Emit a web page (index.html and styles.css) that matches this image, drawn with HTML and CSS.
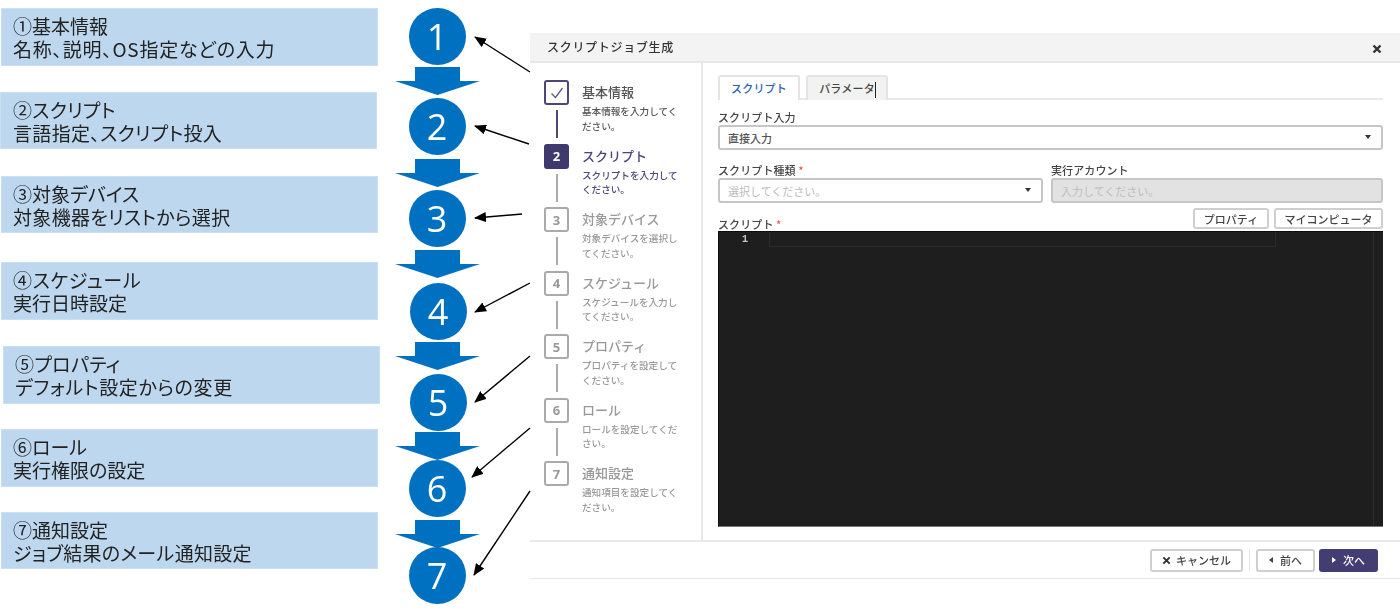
FILE: index.html
```html
<!DOCTYPE html>
<html lang="ja">
<head>
<meta charset="utf-8">
<title>スクリプトジョブ生成</title>
<link rel="stylesheet" href="styles.css">
</head>
<body>
<main class="page">
  <section class="labels">
    <div class="label l1">①基本情報<br><span class="wide">名称、説明、OS指定などの入力</span></div>
    <div class="label l2"><span class="ls1">②スクリプト</span><br><span class="ls1">言語指定、スクリプト投入</span></div>
    <div class="label l3">③対象デバイス<br><span class="ls1">対象機器をリストから選択</span></div>
    <div class="label l4"><span class="ls2">④スケジュール</span><br>実行日時設定</div>
    <div class="label l5"><span class="ls1">⑤プロパティ</span><br><span class="ls2">デフォルト設定からの変更</span></div>
    <div class="label l6">⑥ロール<br>実行権限の設定</div>
    <div class="label l7">⑦通知設定<br><span class="ls1">ジョブ結果のメール通知設定</span></div>
  </section>

  <section class="chain">
    <div class="circle c1">1</div>
    <svg class="down d1" viewBox="0 0 85 28"><polygon points="20,0 65,0 65,14 85,14 42.500,28 0,14 20,14"/></svg>
    <div class="circle c2">2</div>
    <svg class="down d2" viewBox="0 0 85 28"><polygon points="20,0 65,0 65,14 85,14 42.500,28 0,14 20,14"/></svg>
    <div class="circle c3">3</div>
    <svg class="down d3" viewBox="0 0 85 28"><polygon points="20,0 65,0 65,14 85,14 42.500,28 0,14 20,14"/></svg>
    <div class="circle c4">4</div>
    <svg class="down d4" viewBox="0 0 85 28"><polygon points="20,0 65,0 65,14 85,14 42.500,28 0,14 20,14"/></svg>
    <div class="circle c5">5</div>
    <svg class="down d5" viewBox="0 0 85 28"><polygon points="20,0 65,0 65,14 85,14 42.500,28 0,14 20,14"/></svg>
    <div class="circle c6">6</div>
    <svg class="down d6" viewBox="0 0 85 28"><polygon points="20,0 65,0 65,14 85,14 42.500,28 0,14 20,14"/></svg>
    <div class="circle c7">7</div>
  </section>

  <section class="dialog">
    <header class="dialog-head">
      <h1 class="dialog-title">スクリプトジョブ生成</h1>
      <svg class="close" viewBox="0 0 10 10"><path d="M1.5 1.5 8.5 8.5M8.5 1.5 1.5 8.5"/></svg>
    </header>
    <div class="dialog-body">
      <nav class="steps">
        <div class="step done">
          <div class="marker"><span class="box"><svg class="check" viewBox="0 0 16 16"><path d="M2.5 8.5 6.5 12.5 13.5 3"/></svg></span><i class="link"></i></div>
          <div class="step-text"><div class="step-title">基本情報</div><p class="step-desc">基本情報を入力してく<br>ださい。</p></div>
        </div>
        <div class="step active">
          <div class="marker"><span class="box">2</span><i class="link"></i></div>
          <div class="step-text"><div class="step-title">スクリプト</div><p class="step-desc">スクリプトを入力して<br>ください。</p></div>
        </div>
        <div class="step">
          <div class="marker"><span class="box">3</span><i class="link"></i></div>
          <div class="step-text"><div class="step-title">対象デバイス</div><p class="step-desc">対象デバイスを選択し<br>てください。</p></div>
        </div>
        <div class="step">
          <div class="marker"><span class="box">4</span><i class="link"></i></div>
          <div class="step-text"><div class="step-title">スケジュール</div><p class="step-desc">スケジュールを入力し<br>てください。</p></div>
        </div>
        <div class="step">
          <div class="marker"><span class="box">5</span><i class="link"></i></div>
          <div class="step-text"><div class="step-title">プロパティ</div><p class="step-desc">プロパティを設定して<br>ください。</p></div>
        </div>
        <div class="step">
          <div class="marker"><span class="box">6</span><i class="link"></i></div>
          <div class="step-text"><div class="step-title">ロール</div><p class="step-desc">ロールを設定してくだ<br>さい。</p></div>
        </div>
        <div class="step">
          <div class="marker"><span class="box">7</span></div>
          <div class="step-text"><div class="step-title">通知設定</div><p class="step-desc">通知項目を設定してく<br>ださい。</p></div>
        </div>
      </nav>
      <div class="form">
        <div class="tabs">
          <div class="tab current">スクリプト</div>
          <div class="tab">パラメータ<i class="cursor"></i></div>
        </div>
        <div class="field-label">スクリプト入力</div>
        <div class="control value">直接入力<i class="caret"></i></div>
        <div class="field-row">
          <div class="field-left">
            <div class="field-label">スクリプト種類 <span class="req">*</span></div>
            <div class="control placeholder">選択してください。<i class="caret"></i></div>
          </div>
          <div class="field-right">
            <div class="field-label">実行アカウント</div>
            <div class="control disabled">入力してください。</div>
          </div>
        </div>
        <div class="editor-head">
          <div class="field-label flat">スクリプト <span class="req">*</span></div>
          <div class="editor-actions">
            <button class="btn small prop">プロパティ</button>
            <button class="btn small pc">マイコンピュータ</button>
          </div>
        </div>
        <div class="editor">
          <div class="gutter">1</div>
          <div class="code"><div class="active-line"></div></div>
          <div class="scroll"></div>
        </div>
      </div>
    </div>
    <footer class="dialog-foot">
      <button class="btn foot cancel"><svg class="btn-x" viewBox="0 0 10 10"><path d="M1.5 1.5 8.5 8.5M8.5 1.5 1.5 8.5"/></svg>キャンセル</button>
      <i class="foot-sep"></i>
      <button class="btn foot prev"><i class="tri left"></i>前へ</button>
      <button class="btn foot next"><i class="tri right"></i>次へ</button>
    </footer>
  </section>

  <svg class="pointers" viewBox="0 0 1400 612">
    <defs>
      <marker id="tip" markerUnits="userSpaceOnUse" markerWidth="12" markerHeight="10" refX="11" refY="5" orient="auto">
        <path d="M0 0 12 5 0 10Z" fill="#000"/>
      </marker>
    </defs>
    <path class="ptr" marker-end="url(#tip)" d="M530 72 475 37"/>
    <path class="ptr" marker-end="url(#tip)" d="M529 144 475 126"/>
    <path class="ptr" marker-end="url(#tip)" d="M522 214 475 218"/>
    <path class="ptr" marker-end="url(#tip)" d="M530 283 475 312"/>
    <path class="ptr" marker-end="url(#tip)" d="M530 356 475 402"/>
    <path class="ptr" marker-end="url(#tip)" d="M530 428 472 477"/>
    <path class="ptr" marker-end="url(#tip)" d="M530 491 474 575"/>
  </svg>
</main>
</body>
</html>
```
FILE: styles.css
```css
* { box-sizing: border-box; }
html, body { margin: 0; padding: 0; background: #fff; }
body { font-family: "Noto Sans CJK JP", "Noto Sans", sans-serif; color: #333; }

.page {
  position: relative;
  display: flex;
  width: 1400px;
  height: 612px;
  overflow: hidden;
  filter: blur(0.35px);
}

/* left labels */
.labels { width: 381px; flex: none; padding-top: 8px; display: flex; flex-direction: column; }
.label {
  width: 377px;
  height: 58px;
  margin-left: 1px;
  padding: 5px 0 0 11px;
  background: #bdd7ee;
  border: 1px solid #c9dff2;
  color: #222;
  font-size: 19px;
  line-height: 23px;
  font-weight: 400;
  font-feature-settings: "palt";
  white-space: nowrap;
}
.wide { letter-spacing: .75px; }
.ls1 { letter-spacing: .32px; }
.ls2 { letter-spacing: .65px; }
.l2 { margin-top: 26px; margin-left: 0; height: 57px; padding-left: 12px; }
.l3 { margin-top: 27px; height: 57px; }
.l4 { margin-top: 29px; }
.l5 { margin-top: 26px; margin-left: 3px; }
.l6 { margin-top: 25px; }
.l7 { margin-top: 25px; height: 57px; }

/* number chain */
.chain { width: 112px; flex: none; padding-top: 8px; display: flex; flex-direction: column; align-items: center; }
.circle {
  width: 57px;
  height: 57px;
  flex: none;
  border-radius: 50%;
  background: #0070c0;
  color: #fff;
  font-family: "Open Sans", sans-serif;
  font-size: 36px;
  font-weight: 500;
  line-height: 57px;
  text-align: center;
}
.down { width: 85px; height: 28px; flex: none; fill: #0070c0; display: block; }
.d1 { margin-top: 2px; }
.c2 { margin-top: 3px; }
.d2 { margin-top: 4px; }
.c3 { margin-top: 3px; }
.d3 { margin-top: 3px; }
.c4 { margin-top: 5px; transform: translateX(1px); }
.d4 { margin-top: 2px; }
.c5 { margin-top: 4px; transform: translateX(1px); }
.d5 { margin-top: 1px; }
.c6 { margin-top: 0; }
.d6 { margin-top: 3px; }
.c7 { margin-top: -1px; }

/* pointer arrows overlay */
.pointers { position: absolute; left: 0; top: 0; width: 1400px; height: 612px; pointer-events: none; }
.ptr { stroke: #000; stroke-width: 1.4; fill: none; }

/* dialog */
.dialog { width: 870px; height: 546px; flex: none; margin: 33px 0 0 37px; display: flex; flex-direction: column; }
.dialog-head {
  height: 30px;
  flex: none;
  background: #f3f3f3;
  border-bottom: 2px solid #e8e8e8;
  display: flex;
  align-items: center;
  justify-content: space-between;
  padding: 0 18px 0 17px;
}
.dialog-title { margin: 0; font-size: 12px; font-weight: 500; color: #333; line-height: 28px; letter-spacing: .7px; }
.close { width: 10px; height: 10px; margin-top: 3px; stroke: #333; stroke-width: 2.4; fill: none; }

.dialog-body { flex: 1; display: flex; min-height: 0; }
.steps { width: 173px; flex: none; padding: 17px 0 0 14px; border-right: 2px solid #e8e8e8; }
.step { display: flex; height: 63.5px; }
.marker { width: 25px; flex: none; margin-right: 13px; display: flex; flex-direction: column; align-items: center; }
.box {
  width: 25px;
  height: 25px;
  flex: none;
  border: 2px solid #aaa;
  border-radius: 3px;
  display: flex;
  align-items: center;
  justify-content: center;
  font-family: "Noto Sans", sans-serif;
  font-size: 13px;
  font-weight: 700;
  color: #999;
}
.link { width: 2px; height: 28px; margin-top: 5px; background: #aaa; flex: none; }
.step-text { width: 100px; color: #999; margin-top: -1px; }
.step-title { font-size: 13px; line-height: 25px; font-weight: 500; }
.step-desc { margin: 0; font-size: 9.6px; line-height: 14.5px; font-weight: 500; white-space: nowrap; }

.done .box { border-color: #4c4778; }
.done .link { background: #4c4778; }
.done .step-text { color: #555; }
.check { width: 16px; height: 16px; fill: none; stroke: #5d5885; stroke-width: 1.3; }
.active .box { background: #3f3a6e; border-color: #3f3a6e; color: #fff; }
.active .step-text { color: #4c4778; }

/* form */
.form { flex: 1; min-width: 0; padding: 12px 17px 0 15px; }
.tabs { display: flex; gap: 6px; height: 25px; border-bottom: 2px solid #eaeaea; }
.tab {
  position: relative;
  width: 82px;
  height: 25px;
  border: 2px solid #e4e4e4;
  border-bottom: 0;
  border-radius: 3px 3px 0 0;
  background: #f2f2f2;
  font-size: 11px;
  font-weight: 500;
  line-height: 23px;
  text-align: center;
  letter-spacing: .2px;
  color: #444;
}
.tab.current { background: #fff; color: #2b5fae; }
.cursor { position: absolute; left: 67px; top: 5px; width: 1px; height: 16px; background: #222; }

.field-label { height: 14px; margin-top: 10px; font-size: 11px; line-height: 14px; font-weight: 500; color: #444; letter-spacing: .1px; white-space: nowrap; }
.req { color: #f0555a; }
.control {
  position: relative;
  height: 25px;
  margin-top: 1px;
  padding-left: 8px;
  border: 2px solid #c6c6c6;
  border-radius: 3px;
  background: #fff;
  font-size: 11px;
  line-height: 22px;
  white-space: nowrap;
}
.value { color: #555; font-weight: 500; }
.placeholder { color: #bbb; }
.disabled { background: #e2e2e2; color: #bdbdbd; }
.caret {
  position: absolute;
  right: 10px;
  top: 8px;
  border: 4px solid transparent;
  border-top: 4px solid #333;
  border-left-width: 3.5px;
  border-right-width: 3.5px;
}
.field-row { display: flex; gap: 8px; margin-top: 3px; }
.field-left { width: 325px; flex: none; }
.field-right { flex: 1; min-width: 0; }

.editor-head { display: flex; justify-content: space-between; align-items: flex-end; height: 23px; margin-top: 5px; }
.field-label.flat { margin: 0; }
.editor-actions { display: flex; gap: 5px; align-self: flex-start; }
.btn {
  font-family: inherit;
  background: #fff;
  border: 2px solid #cfcfcf;
  border-radius: 3px;
  color: #444;
  font-size: 11px;
  font-weight: 500;
  padding: 0;
  white-space: nowrap;
}
.small { height: 21px; line-height: 16px; }
.prop { width: 76px; }
.pc { width: 109px; }

.editor {
  height: 296px;
  display: flex;
  background: #1e1e1e;
  border-top: 1px solid #0c0c0c;
  border-left: 1px solid #111;
  border-bottom: 1px solid #777;
}
.gutter { width: 50px; flex: none; padding: 1px 21px 0 0; text-align: right; color: #c8c8c8; font-family: "Liberation Mono", monospace; font-size: 10px; font-weight: 700; line-height: 14px; }
.code { flex: 1; min-width: 0; }
.active-line { width: 507px; height: 15px; border: 1px solid #2b2b2b; border-top: 0; }
.scroll { width: 10px; flex: none; border-left: 1px solid #2c2c2c; }

/* footer */
.dialog-foot {
  height: 39px;
  flex: none;
  border-top: 2px solid #eaeaea;
  border-bottom: 1px solid #e6e6e6;
  display: flex;
  align-items: center;
  justify-content: flex-end;
  padding-right: 22px;
}
.foot { height: 23px; display: flex; align-items: center; justify-content: center; font-size: 11px; }
.cancel { width: 93px; }
.prev { width: 59px; margin-right: 4px; }
.next { width: 59px; background: #423d73; border-color: #423d73; color: #fff; }
.btn-x { width: 9px; height: 9px; margin-right: 5px; stroke: #333; stroke-width: 2.2; fill: none; }
.foot-sep { width: 1px; height: 22px; margin: 0 6px; background: #e6e6e6; }
.tri { width: 0; height: 0; margin-right: 7px; border: 3.5px solid transparent; }
.tri.left { border-left: 0; border-right: 4px solid #444; }
.tri.right { border-right: 0; border-left: 4px solid #fff; }
```
